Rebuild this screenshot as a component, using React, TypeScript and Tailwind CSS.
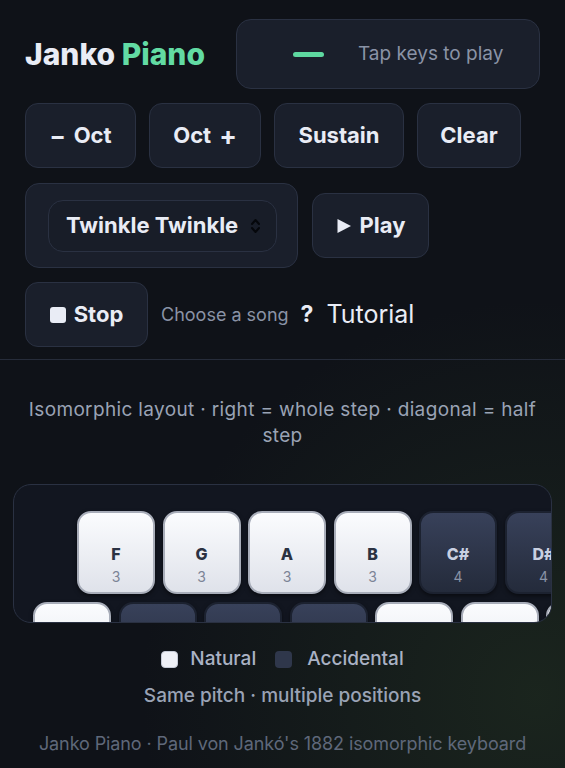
import React from "react";

type Key = { note: string; octave: number };

const topRow: Key[] = [
  { note: "F", octave: 3 },
  { note: "G", octave: 3 },
  { note: "A", octave: 3 },
  { note: "B", octave: 3 },
  { note: "C#", octave: 4 },
  { note: "D#", octave: 4 },
];

const bottomRow: Key[] = [
  { note: "E", octave: 3 },
  { note: "F#", octave: 3 },
  { note: "G#", octave: 3 },
  { note: "A#", octave: 3 },
  { note: "C", octave: 4 },
  { note: "D", octave: 4 },
  { note: "E", octave: 4 },
];

const btn =
  "h-[65px] shrink-0 rounded-[13px] border border-[#2a3142] bg-[#1a1f2b] text-[22px] font-bold text-[#e9ecf5] flex items-center justify-center gap-2";

const PianoKey = ({ note, octave }: Key) => {
  const sharp = note.includes("#");
  return (
    <div
      className={
        sharp
          ? "w-[78px] h-[83px] shrink-0 rounded-[14px] bg-gradient-to-b from-[#38415a] to-[#242b3b] border-2 border-[#1c2230] flex flex-col items-center justify-center pt-[24px] shadow-[0_2px_4px_rgba(0,0,0,0.5)]"
          : "w-[78px] h-[83px] shrink-0 rounded-[14px] bg-gradient-to-b from-[#fbfcfe] to-[#dfe2ea] border-2 border-[#a8adb9] flex flex-col items-center justify-center pt-[24px] shadow-[0_2px_4px_rgba(0,0,0,0.5)]"
      }
    >
      <span className={sharp ? "text-[16px] font-extrabold leading-none text-[#c9d0e1]" : "text-[16px] font-extrabold leading-none text-[#2b3242]"}>
        {note}
      </span>
      <span className={sharp ? "mt-[8px] text-[14px] leading-none text-[#8a93a7]" : "mt-[8px] text-[14px] leading-none text-[#7c8496]"}>
        {octave}
      </span>
    </div>
  );
};

export default function App() {
  return (
    <div
      className="min-h-[768px] w-full overflow-hidden bg-[#0f1218] bg-[radial-gradient(circle_at_95%_90%,rgba(48,72,40,0.35),transparent_45%)] text-[#e9ecf5]"
      style={{ fontFamily: "Inter, 'Noto Sans', sans-serif" }}
    >
      <div className="px-[25px] pt-[19px]">
        {/* header */}
        <div className="flex items-center gap-[31px]">
          <h1 className="text-[30px] font-extrabold whitespace-nowrap">
            Janko <span className="text-[#62dba3]">Piano</span>
          </h1>
          <div className="h-[70px] w-[304px] shrink-0 rounded-[15px] border border-[#2a3142] bg-[#1a1f2b] flex items-center pl-[56px]">
            <div className="h-[5px] w-[31px] rounded-sm bg-[#5ed8a0]" />
            <span className="ml-[34px] text-[19px] text-[#8a93a6] whitespace-nowrap">Tap keys to play</span>
          </div>
        </div>

        {/* octave row */}
        <div className="mt-[14px] flex items-center gap-[13px]">
          <button className={btn + " w-[111px]"}>
            <span className="text-[24px] leading-none">−</span> Oct
          </button>
          <button className={btn + " w-[112px]"}>
            Oct <span className="text-[26px] leading-none">+</span>
          </button>
          <button className={btn + " w-[130px]"}>Sustain</button>
          <button className={btn + " w-[104px]"}>Clear</button>
        </div>

        {/* song row */}
        <div className="mt-[15px] flex items-center gap-[14px]">
          <div className="h-[85px] w-[273px] shrink-0 rounded-[14px] border border-[#2a3142] bg-[#1a1f2b] flex items-center pl-[22px]">
            <div className="h-[52px] w-[229px] rounded-[15px] border border-[#2a3142] bg-[#181d28] flex items-center pl-[17px] gap-[12px]">
              <span className="text-[22px] font-bold whitespace-nowrap">Twinkle Twinkle</span>
              <svg className="shrink-0" width="11" height="16" viewBox="0 0 11 16" fill="none" stroke="#05070b" strokeWidth="2" strokeLinecap="round" strokeLinejoin="round">
                <path d="M2 6l3.5-4L9 6" />
                <path d="M2 10l3.5 4L9 10" />
              </svg>
            </div>
          </div>
          <button className={btn + " w-[117px]"}>
            <svg className="shrink-0" width="16" height="16" viewBox="0 0 16 16">
              <path d="M1.5 1L15 8 1.5 15z" fill="#e9ecf5" strokeLinejoin="round" />
            </svg>
            Play
          </button>
        </div>

        {/* stop row */}
        <div className="mt-[14px] flex items-center">
          <button className={btn + " w-[123px]"}>
            <span className="h-[16px] w-[16px] shrink-0 rounded-[3px] bg-[#e9ecf5]" />
            Stop
          </button>
          <span className="ml-[13px] text-[18px] text-[#8a93a6] whitespace-nowrap">Choose a song</span>
          <span className="ml-[12px] text-[23px] font-bold">?</span>
          <span className="ml-[13px] text-[25px] whitespace-nowrap">Tutorial</span>
        </div>
      </div>

      <div className="mt-[12px] h-px w-full bg-[#262c3a]" />

      <p className="mt-[37px] px-[22px] text-center text-[19px] leading-[26px] tracking-[0.35px] text-[#9aa3b5]">
        Isomorphic layout · right = whole step · diagonal = half step
      </p>

      {/* keyboard */}
      <div className="mx-[13px] mt-[35px] h-[139px] overflow-hidden rounded-[18px] border border-[#2a3142] bg-[#121620] pt-[26px]">
        <div className="flex gap-[7.5px] pl-[63px]">
          {topRow.map((k, i) => (
            <PianoKey key={i} {...k} />
          ))}
        </div>
        <div className="mt-[8px] flex gap-[7.5px] pl-[19px]">
          {bottomRow.map((k, i) => (
            <PianoKey key={i} {...k} />
          ))}
        </div>
      </div>

      {/* legend */}
      <div className="mt-[22px] flex items-center justify-center text-[19px] font-medium text-[#aab2c4]">
        <span className="h-[17px] w-[17px] rounded-[4px] border border-[#c5cad6] bg-[#eef0f6]" />
        <span className="ml-[12px]">Natural</span>
        <span className="ml-[19px] h-[17px] w-[17px] rounded-[4px] bg-[#2f374b]" />
        <span className="ml-[15px]">Accidental</span>
      </div>
      <p className="mt-[8px] text-center text-[19px] font-medium text-[#9aa3b5]">
        Same pitch · multiple positions
      </p>
      <p className="mt-[20px] pb-4 text-center text-[18px] tracking-[-0.1px] text-[#5f687a]">
        Janko Piano · Paul von Jankó's 1882 isomorphic keyboard
      </p>
    </div>
  );
}
